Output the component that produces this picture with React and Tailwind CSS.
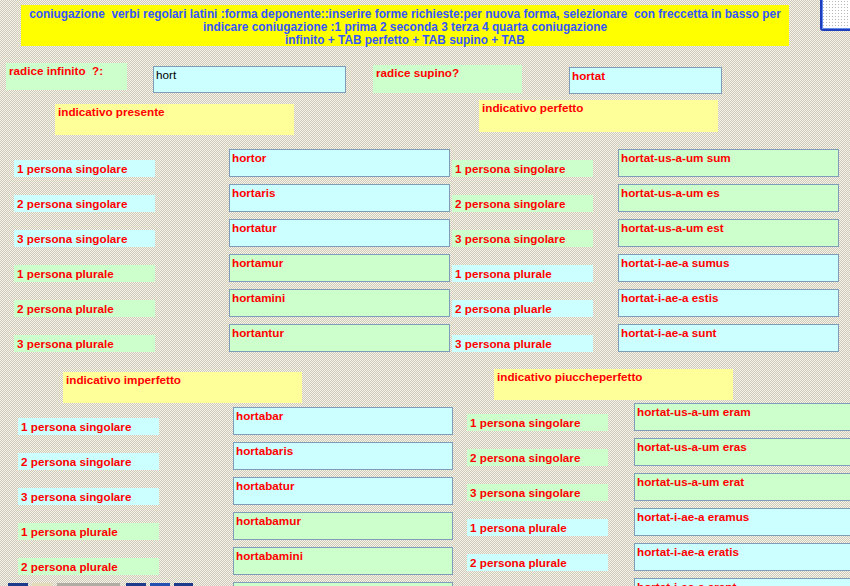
import React from 'react';

const CYAN = 'bg-[#ccffff]';
const GREEN = 'bg-[#ccffcc]';

const presente = [
  ['1 persona singolare', 'hortor'],
  ['2 persona singolare', 'hortaris'],
  ['3 persona singolare', 'hortatur'],
  ['1 persona plurale', 'hortamur'],
  ['2 persona plurale', 'hortamini'],
  ['3 persona plurale', 'hortantur'],
];

const perfetto = [
  ['1 persona singolare', 'hortat-us-a-um sum'],
  ['2 persona singolare', 'hortat-us-a-um es'],
  ['3 persona singolare', 'hortat-us-a-um est'],
  ['1 persona plurale', 'hortat-i-ae-a sumus'],
  ['2 persona pluarle', 'hortat-i-ae-a estis'],
  ['3 persona plurale', 'hortat-i-ae-a sunt'],
];

// last row only peeks in at the bottom edge, so only the right field shows text
const imperfetto = [
  ['1 persona singolare', 'hortabar'],
  ['2 persona singolare', 'hortabaris'],
  ['3 persona singolare', 'hortabatur'],
  ['1 persona plurale', 'hortabamur'],
  ['2 persona plurale', 'hortabamini'],
  ['', ''],
];

const piucche = [
  ['1 persona singolare', 'hortat-us-a-um eram'],
  ['2 persona singolare', 'hortat-us-a-um eras'],
  ['3 persona singolare', 'hortat-us-a-um erat'],
  ['1 persona plurale', 'hortat-i-ae-a eramus'],
  ['2 persona plurale', 'hortat-i-ae-a eratis'],
  ['', 'hortat-i-ae-a erant'],
];

const Label = ({ className, children }) => (
  <div className={`shrink-0 w-[141px] h-[17px] pl-[3px] leading-[17px] whitespace-nowrap ${className}`}>{children}</div>
);

const Field = ({ className, children }) => (
  <div className={`shrink-0 h-[28px] border border-[#7f9db9] pl-[2px] leading-[15px] whitespace-nowrap ${className}`}>{children}</div>
);

const Header = ({ className, children }) => (
  <div className={`shrink-0 w-[239px] h-[31px] bg-[#ffff99] pl-[3px] leading-[15px] ${className}`}>{children}</div>
);

export default function App() {
  return (
    <div className="relative w-[850px] h-[586px] overflow-hidden bg-[repeating-conic-gradient(#cdc9bd_0%_25%,#f7f4e6_0%_50%)] bg-[length:2px_2px] font-['Liberation_Sans',Arial,sans-serif] text-[11.7px] font-bold text-[#ff0000]">
      {/* top instructions */}
      <div className="ml-[21px] mt-[5px] w-[768px] h-[41px] bg-[#ffff00] pt-[3px] text-center text-[11.85px] leading-[13px] text-[#3355ff] whitespace-pre">
        <div>coniugazione  verbi regolari latini :forma deponente::inserire forme richieste:per nuova forma, selezionare  con freccetta in basso per</div>
        <div>indicare coniugazione :1 prima 2 seconda 3 terza 4 quarta coniugazione</div>
        <div>infinito + TAB perfetto + TAB supino + TAB</div>
      </div>

      {/* radice */}
      <div className="mt-[17px] flex items-start h-[31px]">
        <div className={`ml-[6px] w-[121px] h-[27px] pl-[3px] leading-[15px] whitespace-pre ${GREEN}`}>radice infinito  ?:</div>
        <div className={`ml-[26px] mt-[3px] w-[193px] h-[27px] border border-[#7f9db9] pl-[2px] leading-[15px] font-normal text-black ${CYAN}`}>hort</div>
        <div className={`ml-[27px] mt-[2px] w-[149px] h-[28px] pl-[3px] leading-[15px] ${GREEN}`}>radice supino?</div>
        <div className={`ml-[47px] mt-[4px] w-[153px] h-[27px] border border-[#7f9db9] pl-[2px] leading-[15px] ${CYAN}`}>hortat</div>
      </div>

      {/* presente / perfetto headers */}
      <div className="mt-[6px] flex items-start h-[35px]">
        <Header className="ml-[55px] mt-[4px]">indicativo presente</Header>
        <Header className="ml-[185px] h-[32px]">indicativo perfetto</Header>
      </div>

      <div className="mt-[14px] flex flex-col">
        {presente.map(([lab, val], i) => (
          <div key={lab} className="flex items-start h-[35px]">
            <Label className={`ml-[14px] mt-[11px] ${i < 3 ? CYAN : GREEN}`}>{lab}</Label>
            <Field className={`ml-[74px] w-[221px] ${i < 3 ? CYAN : GREEN}`}>{val}</Field>
            <Label className={`ml-[2px] mt-[11px] ${i < 3 ? GREEN : CYAN}`}>{perfetto[i][0]}</Label>
            <Field className={`ml-[25px] w-[221px] ${i < 3 ? GREEN : CYAN}`}>{perfetto[i][1]}</Field>
          </div>
        ))}
      </div>

      {/* imperfetto / piuccheperfetto headers */}
      <div className="mt-[10px] flex items-start h-[34px]">
        <Header className="ml-[63px] mt-[3px]">indicativo imperfetto</Header>
        <Header className="ml-[192px]">indicativo piuccheperfetto</Header>
      </div>

      <div className="flex flex-col">
        {imperfetto.map(([lab, val], i) => (
          <div key={i} className="flex items-start h-[35px] shrink-0">
            <Label className={`ml-[18px] mt-[15px] ${i < 3 ? CYAN : GREEN}`}>{lab}</Label>
            <Field className={`ml-[74px] mt-[4px] w-[220px] ${i < 3 ? CYAN : GREEN}`}>{val}</Field>
            <Label className={`ml-[14px] mt-[11px] ${i < 3 ? GREEN : CYAN}`}>{piucche[i][0]}</Label>
            <Field className={`ml-[26px] w-[221px] ${i < 3 ? GREEN : CYAN}`}>{piucche[i][1]}</Field>
          </div>
        ))}
      </div>

      {/* window corner, top right */}
      <div className="absolute right-0 top-0 w-[30px] h-[31px] rounded-bl-[3px] border-l-2 border-b-2 border-[#1c3fc0] bg-white bg-[radial-gradient(#b8b8b8_0.6px,transparent_0.8px)] bg-[length:3px_3px] shadow-[inset_1px_-1px_0_#6a8ae8]"></div>

      {/* tops of buttons below */}
      <div className="absolute left-0 bottom-0 flex h-[3px]">
        <div className="ml-[8px] w-[20px] bg-[#1e3a8a]"></div>
        <div className="ml-[4px] w-[20px] bg-[#e4dcb8]"></div>
        <div className="ml-[5px] w-[63px] bg-[#b0aca4]"></div>
        <div className="ml-[6px] w-[20px] bg-[#1e3a8a]"></div>
        <div className="ml-[4px] w-[20px] bg-[#2450b0]"></div>
        <div className="ml-[4px] w-[19px] bg-[#1e3a8a]"></div>
      </div>
    </div>
  );
}
